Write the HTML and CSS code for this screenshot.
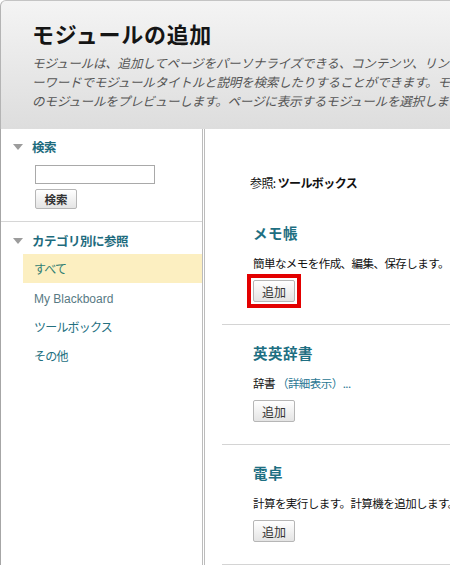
FILE: index.html
```html
<!DOCTYPE html>
<html lang="ja">
<head>
<meta charset="utf-8">
<title>モジュールの追加</title>
<link rel="stylesheet" href="styles.css">
</head>
<body>
<div class="page">
  <header class="page-header">
    <h1 class="title">モジュールの追加</h1>
    <p class="intro">モジュールは、追加してページをパーソナライズできる、コンテンツ、リンク、およびツールです。キ<br>ーワードでモジュールタイトルと説明を検索したりすることができます。モジュール名をクリックしてこ<br>のモジュールをプレビューします。ページに表示するモジュールを選択します。</p>
  </header>
  <div class="layout">
    <aside class="sidebar">
      <section class="side-section search">
        <h2 class="side-heading"><span class="tri"></span>検索</h2>
        <input class="search-input" type="text">
        <button class="btn btn-bold" type="button">検索</button>
      </section>
      <section class="side-section browse">
        <h2 class="side-heading"><span class="tri"></span>カテゴリ別に参照</h2>
        <ul class="cat-list">
          <li class="cat active">すべて</li>
          <li class="cat muted">My Blackboard</li>
          <li class="cat">ツールボックス</li>
          <li class="cat">その他</li>
        </ul>
      </section>
    </aside>
    <div class="divider"></div>
    <main class="main">
      <p class="crumb">参照: <b>ツールボックス</b></p>
      <div class="module">
        <h3 class="module-title">メモ帳</h3>
        <p class="module-desc">簡単なメモを作成、編集、保存します。</p>
        <span class="highlight"><button class="btn" type="button">追加</button></span>
      </div>
      <div class="module">
        <h3 class="module-title">英英辞書</h3>
        <p class="module-desc">辞書 <span class="more">（詳細表示）...</span></p>
        <button class="btn" type="button">追加</button>
      </div>
      <div class="module">
        <h3 class="module-title">電卓</h3>
        <p class="module-desc">計算を実行します。計算機を追加します。</p>
        <button class="btn" type="button">追加</button>
      </div>
    </main>
  </div>
</div>
</body>
</html>
```
FILE: styles.css
```css
html, body {
  margin: 0;
  padding: 0;
  background: #fff;
  overflow: hidden;
}
body {
  font-family: "Liberation Sans", "Noto Sans CJK JP", sans-serif;
  color: #222;
  font-size: 12px;
}
.page {
  width: 450px;
  height: 565px;
  overflow: hidden;
}
.page-header {
  box-sizing: border-box;
  height: 129px;
  border-top: 1px solid #c4c4c4;
  border-left: 1px solid #b4b4b4;
  border-top-left-radius: 6px;
  background: linear-gradient(#f4f4f4, #dddddd);
  padding: 17px 0 0 31px;
  overflow: hidden;
}
.title {
  margin: 0;
  font-family: "Noto Sans CJK JP", sans-serif;
  font-size: 22px;
  line-height: 30px;
  font-weight: bold;
  color: #151515;
  letter-spacing: 0.7px;
}
.intro {
  margin: 5px 0 0;
  font-family: "Noto Sans CJK JP", sans-serif;
  font-size: 12.5px;
  line-height: 19px;
  font-style: italic;
  color: #555;
  white-space: nowrap;
  letter-spacing: -0.15px;
}
.layout {
  display: flex;
  height: 436px;
}
.sidebar {
  box-sizing: border-box;
  width: 202px;
  flex: none;
  border-left: 1px solid #a6a6a6;
}
.divider {
  box-sizing: border-box;
  width: 3px;
  flex: none;
  border-left: 1px solid #bcbcbc;
  border-right: 1px solid #bcbcbc;
}
.side-section.search {
  padding: 8px 0 12px;
  border-bottom: 1px solid #d6d6d6;
}
.side-section.browse {
  padding-top: 9px;
}
.side-heading {
  display: flex;
  align-items: center;
  gap: 9px;
  margin: 0;
  padding-left: 12px;
  font-family: "Noto Sans CJK JP", sans-serif;
  font-size: 12.5px;
  line-height: 20px;
  font-weight: bold;
  color: #1d6b7d;
  letter-spacing: -0.5px;
}
.tri {
  width: 0;
  height: 0;
  border-left: 5px solid transparent;
  border-right: 5px solid transparent;
  border-top: 6px solid #9c9c9c;
}
.search-input {
  display: block;
  box-sizing: border-box;
  width: 120px;
  height: 19px;
  margin: 8px 0 0 34px;
  border: 1px solid #a9a9a9;
  padding: 0 2px;
  background: #fff;
}
.btn {
  display: block;
  box-sizing: border-box;
  height: 22px;
  width: 42px;
  padding: 0;
  border: 1px solid #b6b6b6;
  border-radius: 2px;
  background: linear-gradient(#ffffff, #e4e4e4);
  font-family: "Noto Sans CJK JP", sans-serif;
  font-size: 12px;
  color: #333;
}
.search .btn {
  height: 20px;
  margin: 5px 0 0 34px;
}
.btn-bold {
  font-weight: bold;
  font-size: 11.5px;
}
.cat-list {
  list-style: none;
  margin: 3px 0 0 22px;
  padding: 0;
}
.cat {
  height: 29px;
  line-height: 29px;
  padding-left: 11px;
  font-family: "Noto Sans CJK JP", sans-serif;
  font-size: 12px;
  color: #24707f;
  letter-spacing: -0.8px;
}
.cat.active {
  background: #fcefc1;
  color: #2f7d72;
}
.cat.muted {
  font-family: "Liberation Sans", sans-serif;
  color: #587a84;
  letter-spacing: 0;
  line-height: 32px;
}
.main {
  flex: 1;
  min-width: 0;
  padding: 45px 0 0 17px;
  overflow: hidden;
}
.crumb {
  margin: 0 0 13px;
  padding-left: 28px;
  font-family: "Noto Sans CJK JP", sans-serif;
  font-size: 12px;
  line-height: 18px;
  color: #111;
  letter-spacing: -0.6px;
  white-space: nowrap;
}
.module {
  padding: 18px 0 22px 31px;
  border-bottom: 1px solid #d4d4d4;
}
.module-title {
  margin: 0;
  font-family: "Noto Sans CJK JP", sans-serif;
  font-size: 14.5px;
  line-height: 20px;
  font-weight: bold;
  color: #1e6f82;
  letter-spacing: 0.5px;
}
.module-desc {
  margin: 11px 0 8px;
  font-family: "Noto Sans CJK JP", sans-serif;
  font-size: 11.5px;
  line-height: 18px;
  color: #111;
  white-space: nowrap;
  letter-spacing: -0.55px;
}
.more {
  color: #2a7794;
}
.highlight {
  display: inline-block;
  border: 4px solid #e30000;
  padding: 2px;
  margin: -6px;
  vertical-align: top;
}
```
